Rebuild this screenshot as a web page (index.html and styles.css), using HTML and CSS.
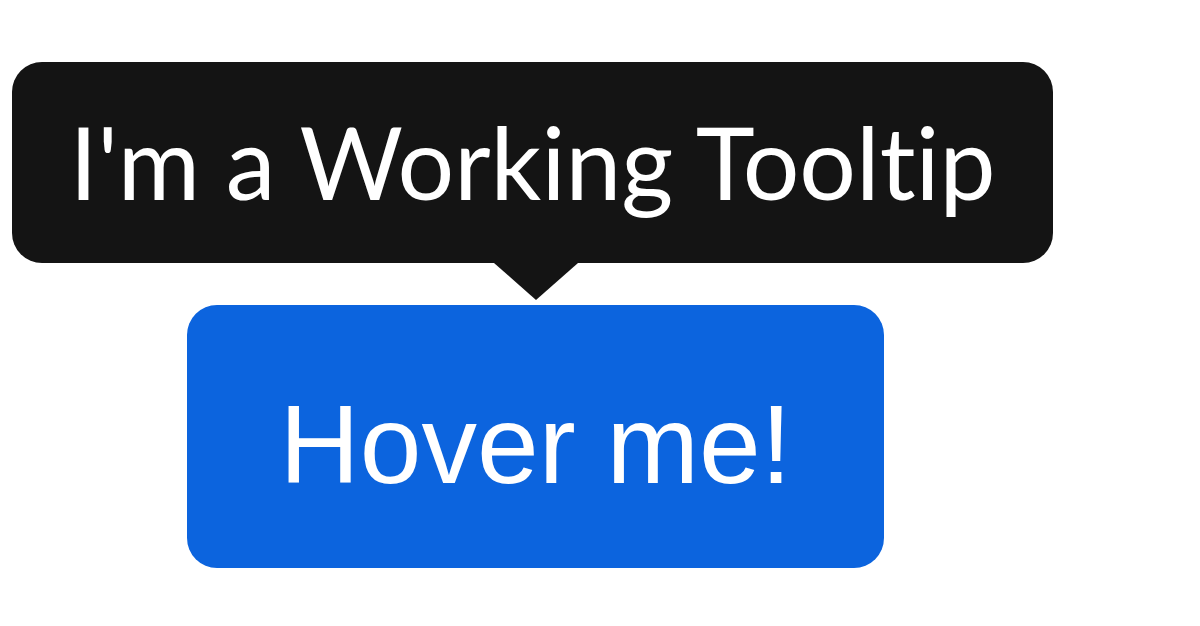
FILE: index.html
```html
<!DOCTYPE html>
<html lang="en">
<head>
  <meta charset="UTF-8">
  <meta name="viewport" content="width=device-width, initial-scale=1.0">
  <title>Tooltip</title>
  <link rel="stylesheet" href="styles.css">
</head>
<body>
  <div class="stage">
    <div class="tooltip">
      <div class="tooltip-inner">I'm a Working Tooltip</div>
      <div class="tooltip-arrow"></div>
    </div>
    <button class="btn" type="button">Hover me!</button>
  </div>
</body>
</html>
```

FILE: styles.css
```css
*{
  margin: 0;
  padding: 0;
  box-sizing: border-box;
}
body {
  background: #fff;
}
.stage {
  width: 1071px;
  padding-top: 62px;
  display: flex;
  flex-direction: column;
  align-items: center;
}
/* 提示框 + 下方小三角 */
.tooltip {
  display: flex;
  flex-direction: column;
  align-items: center;
}
.tooltip-inner {
  width: 1041px;
  height: 201px;
  margin-right: 6px;
  display: flex;
  align-items: center;
  justify-content: center;
  padding-bottom: 3px;
  background: #141414;
  border-radius: 30px;
  color: #fff;
  font-family: Lato, "Open Sans", sans-serif;
  font-size: 100px;
  line-height: 1;
  white-space: nowrap;
  font-variant-ligatures: none;
}
.tooltip-arrow {
  width: 0;
  height: 0;
  border-left: 42px solid transparent;
  border-right: 42px solid transparent;
  border-top: 37px solid #141414;
}
.btn {
  margin-top: 5px;
  width: 697px;
  height: 263px;
  padding-top: 18px;
  border: 0;
  border-radius: 30px;
  background: #0c64de;
  color: #fff;
  font-family: "Liberation Sans", Arial, sans-serif;
  font-size: 111px;
  line-height: 1;
}
```
